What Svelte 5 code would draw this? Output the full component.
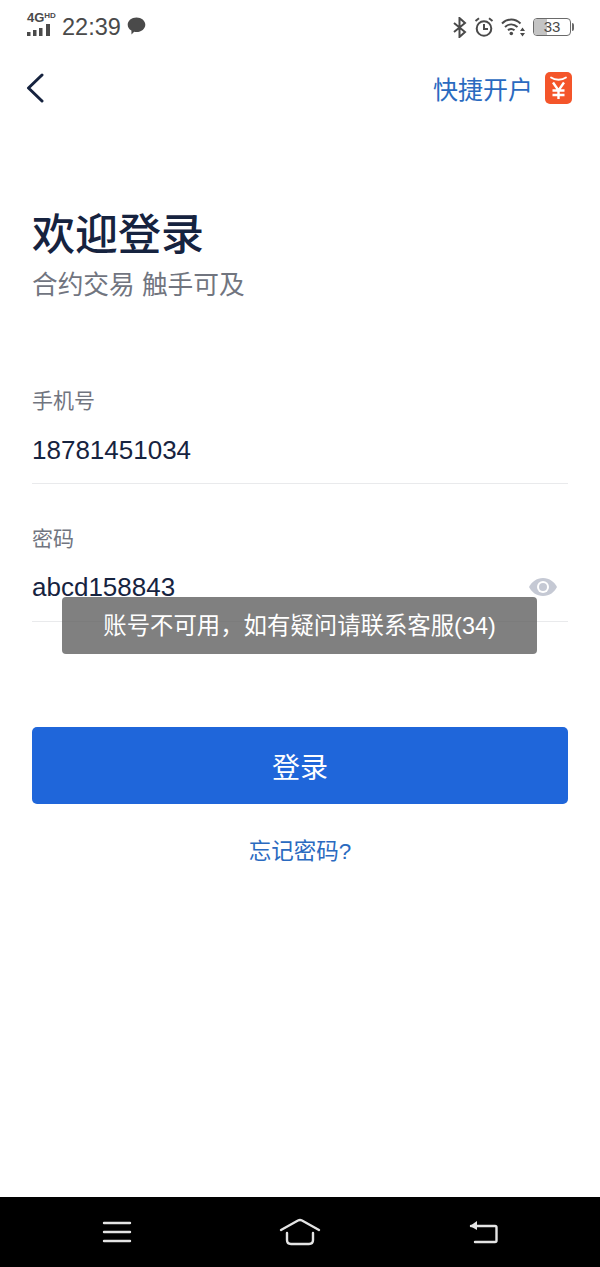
<script>
  let phone = '18781451034';
  let password = 'abcd158843';
</script>

<div class="page">
  <div class="status">
    <div class="status-left">
      <div class="net">
        <span class="net-label">4G<sup>HD</sup></span>
        <svg width="24" height="12" viewBox="0 0 24 12"><path fill="#4a4a4a" d="M0 8h3.500v4H0zM6 6h3.500v6H6zM12 4h3.500v8H12zM19 0h4v12h-4z"/></svg>
      </div>
      <span class="time">22:39</span>
      <svg class="bubble" width="19" height="18" viewBox="0 0 19 18"><path fill="#4a4a4a" d="M9.500 0.500c4.900 0 8.800 3.200 8.800 7.200S14.400 15 9.500 15c-.8 0-1.600-.1-2.300-.2L4.500 17.500l-.1-4C2 12.200.7 10.100.7 7.700.7 3.700 4.600.5 9.500.5z"/></svg>
    </div>
    <div class="status-right">
      <svg width="14" height="21" viewBox="0 0 14 21" fill="none" stroke="#4a4a4a" stroke-width="2"><path d="M1 6l11 9-5.500 5V1L12 6 1 15"/></svg>
      <svg width="20" height="20" viewBox="0 0 20 20" fill="none" stroke="#4a4a4a" stroke-width="2"><circle cx="10" cy="11.500" r="7.300"/><path d="M10 7v5h4M1.500 4L5 1.300M18.500 4L15 1.300"/></svg>
      <svg width="25" height="20" viewBox="0 0 25 20" fill="none" stroke="#4a4a4a" stroke-width="2"><path d="M1 6.500c5.500-5.300 13-5.300 18.500 0M4 10c3.800-3.500 8.700-3.500 12.500 0M7 13.300c2-1.700 4.500-1.700 6.500 0"/><circle cx="10.300" cy="16.500" r="1.800" fill="#4a4a4a" stroke="none"/><path fill="#4a4a4a" stroke="none" d="M21.500 10.500l2.500 3.500h-5zM21.500 19.500l2.500-3.500h-5z"/></svg>
      <div class="battery">
        <div class="battery-fill"></div>
        <span>33</span>
      </div>
      <div class="battery-tip"></div>
    </div>
  </div>

  <div class="topbar">
    <svg class="back" width="18" height="30" viewBox="0 0 18 30" fill="none" stroke="#16233f" stroke-width="3" stroke-linecap="round" stroke-linejoin="round"><path d="M16 2L2.500 15 16 28"/></svg>
    <div class="quick">
      <span>快捷开户</span>
      <svg width="27" height="32" viewBox="0 0 27 32">
        <rect width="27" height="32" rx="5" fill="#f4552a"/>
        <path d="M6 5.500c4 3 11 3 15 0" fill="none" stroke="#fff" stroke-width="1.800" stroke-linecap="round"/>
        <path d="M8 10.500l5.500 8 5.500-8M13.500 18.500V27M7.500 18.500h12M7.500 23h12" fill="none" stroke="#fff" stroke-width="2.400"/>
      </svg>
    </div>
  </div>

  <div class="main">
    <h1>欢迎登录</h1>
    <p class="sub">合约交易 触手可及</p>

    <div class="field first">
      <div class="label">手机号</div>
      <div class="value">{phone}</div>
    </div>
    <div class="field second">
      <div class="label">密码</div>
      <div class="value">
        {password}
        <svg class="eye" width="30" height="20" viewBox="0 0 30 20"><path fill="#c5c9d4" d="M15 1c6.500 0 11.500 4 14 9-2.500 5-7.500 9-14 9S3.500 15 1 10c2.500-5 7.500-9 14-9z"/><circle cx="15" cy="10" r="6" fill="#fff"/><circle cx="15" cy="10" r="4" fill="#c5c9d4"/></svg>
      </div>
    </div>

    <button class="login">登录</button>
    <div class="forgot">忘记密码?</div>
  </div>

  <div class="toast">账号不可用，如有疑问请联系客服(34)</div>

  <div class="navbar">
    <svg width="30" height="24" viewBox="0 0 30 24" fill="none" stroke="#e4e4e4" stroke-width="2.400" stroke-linecap="round"><path d="M2 3h26M2 12h26M2 21h26"/></svg>
    <svg width="42" height="28" viewBox="0 0 42 28" fill="none" stroke="#e4e4e4" stroke-width="2.400" stroke-linecap="round" stroke-linejoin="round"><path d="M2 12L19 2.500c1.500-.7 2.500-.7 4 0L40 12"/><path d="M8 15v7c0 2.500 1.500 4 4 4h18c2.500 0 4-1.500 4-4v-7"/></svg>
    <svg width="30" height="24" viewBox="0 0 30 24" fill="none" stroke="#e4e4e4" stroke-width="2.400" stroke-linecap="round" stroke-linejoin="round"><path d="M3 6h24c1 0 1.500.5 1.500 1.500v13c0 1-.5 1.500-1.500 1.500H7"/><path fill="#e4e4e4" stroke="none" d="M9 1v9L2 6z"/></svg>
  </div>
</div>

<style>
  :global(body) {
    margin: 0;
    background: #fff;
  }

  .page {
    position: relative;
    width: 600px;
    height: 1267px;
    display: flex;
    flex-direction: column;
    overflow: hidden;
    font-family: "Liberation Sans", "Noto Sans CJK SC", sans-serif;
    color: #16233f;
  }

  .status {
    height: 54px;
    flex: none;
    display: flex;
    justify-content: space-between;
    align-items: center;
    padding: 0 26px 0 27px;
    box-sizing: border-box;
  }

  .status-left, .status-right {
    display: flex;
    align-items: center;
  }

  .status-left { gap: 7px; }
  .status-right { gap: 7px; }

  .bubble { margin-left: -1px; margin-top: -3px; }

  .net {
    display: flex;
    flex-direction: column;
    gap: 0;
    width: 28px;
    margin-top: -6px;
  }

  .net-label {
    font: bold 13px/12px "Liberation Sans", sans-serif;
    color: #4a4a4a;
  }

  .net-label sup {
    font-size: 8px;
    line-height: 0;
    vertical-align: 4px;
  }

  .time {
    font: 23.500px "Liberation Sans", sans-serif;
    color: #4a4a4a;
  }

  .battery {
    position: relative;
    width: 36px;
    height: 16px;
    border: 1px solid #6a6a6a;
    border-radius: 4px;
    overflow: hidden;
    text-align: center;
    font: 15px/16px "Liberation Sans", sans-serif;
    color: #4a4a4a;
  }

  .battery span { position: relative; }

  .battery-fill {
    position: absolute;
    left: 0;
    top: 0;
    bottom: 0;
    width: 13px;
    background: #c4c4c4;
  }

  .battery-tip {
    width: 2px;
    height: 8px;
    background: #6a6a6a;
    margin-left: -6px;
    border-radius: 0 2px 2px 0;
  }

  .topbar {
    height: 68px;
    flex: none;
    display: flex;
    justify-content: space-between;
    align-items: center;
    padding: 0 28px 0 26px;
  }

  .quick {
    display: flex;
    align-items: center;
    gap: 12px;
    font-size: 25px;
    color: #2a6ac0;
  }

  .main {
    flex: 1;
    padding: 0 32px;
  }

  h1 {
    margin: 83px 0 0;
    font-size: 43px;
    font-weight: 500;
    line-height: 60px;
    letter-spacing: 0;
  }

  .sub {
    margin: 3px 0 0;
    font-size: 25.700px;
    line-height: 34px;
    color: #71757f;
  }

  .field {
    border-bottom: 1px solid #e9eaec;
    height: 98px;
    box-sizing: border-box;
  }

  .first { margin-top: 84px; }
  .second { margin-top: 40px; }

  .label {
    font-size: 21px;
    line-height: 30px;
    color: #71757f;
  }

  .value {
    position: relative;
    margin-top: 16px;
    font-size: 26px;
    line-height: 36px;
  }

  .second .value { margin-top: 15px; }

  .eye {
    position: absolute;
    right: 10px;
    top: 8px;
  }

  .login {
    display: block;
    width: 100%;
    height: 77px;
    margin-top: 105px;
    border: none;
    border-radius: 5px;
    background: #1f66da;
    color: #fff;
    font: 28px "Liberation Sans", "Noto Sans CJK SC", sans-serif;
  }

  .forgot {
    margin-top: 31px;
    text-align: center;
    font-size: 22.500px;
    line-height: 34px;
    color: #2a6ac0;
  }

  .toast {
    position: absolute;
    left: 62px;
    top: 597px;
    width: 475px;
    height: 57px;
    border-radius: 4px;
    background: rgba(96, 96, 96, 0.8);
    color: #fff;
    font-size: 23.400px;
    line-height: 59px;
    text-align: center;
  }

  .navbar {
    height: 70px;
    flex: none;
    background: #000;
    display: flex;
    justify-content: space-between;
    align-items: center;
    padding: 0 102px;
  }
</style>
